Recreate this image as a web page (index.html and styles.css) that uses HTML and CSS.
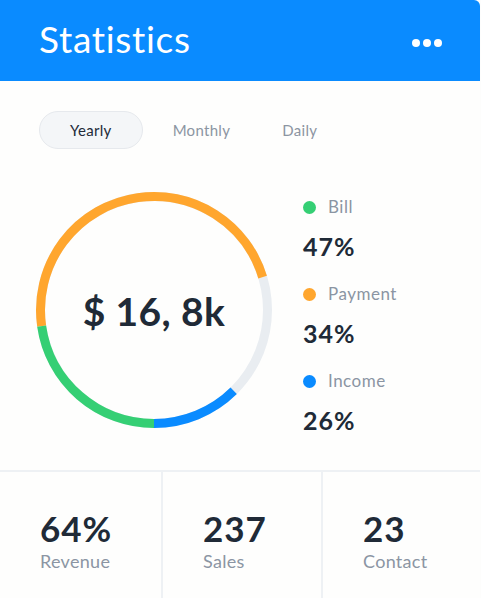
FILE: index.html
```html
<!DOCTYPE html>
<html>
<head>
<meta charset="utf-8">
<link rel="stylesheet" href="styles.css">
</head>
<body>
<div class="card">
  <header class="header">
    <h1 class="title">Statistics</h1>
    <div class="more"><span></span><span></span><span></span></div>
  </header>
  <nav class="tabs">
    <span class="tab tab-active">Yearly</span>
    <span class="tab">Monthly</span>
    <span class="tab">Daily</span>
  </nav>
  <section class="chart">
    <div class="donut">
      <svg width="240" height="240" viewBox="0 0 240 240">
        <circle cx="120" cy="120" r="113.5" fill="none" stroke="#e9edf1" stroke-width="9"/>
        <circle cx="120" cy="120" r="113.5" fill="none" stroke="#ffa62e" stroke-width="9" pathLength="360" stroke-dasharray="171.3 360" transform="rotate(171.8 120 120)"/>
        <circle cx="120" cy="120" r="113.5" fill="none" stroke="#0a8bff" stroke-width="9" pathLength="360" stroke-dasharray="44.6 360" transform="rotate(45.4 120 120)"/>
        <circle cx="120" cy="120" r="113.5" fill="none" stroke="#35cf74" stroke-width="9" pathLength="360" stroke-dasharray="81.8 360" transform="rotate(90 120 120)"/>
      </svg>
      <div class="total">$ 16, 8k</div>
    </div>
    <ul class="legend">
      <li class="legend-item">
        <div class="legend-label"><i class="dot dot-green"></i>Bill</div>
        <div class="legend-value">47%</div>
      </li>
      <li class="legend-item">
        <div class="legend-label"><i class="dot dot-orange"></i>Payment</div>
        <div class="legend-value">34%</div>
      </li>
      <li class="legend-item">
        <div class="legend-label"><i class="dot dot-blue"></i>Income</div>
        <div class="legend-value">26%</div>
      </li>
    </ul>
  </section>
  <section class="stats">
    <div class="stat"><div class="stat-num">64%</div><div class="stat-label">Revenue</div></div>
    <div class="stat"><div class="stat-num">237</div><div class="stat-label">Sales</div></div>
    <div class="stat"><div class="stat-num">23</div><div class="stat-label">Contact</div></div>
  </section>
</div>
</body>
</html>
```

FILE: styles.css
```css
* { box-sizing: border-box; margin: 0; padding: 0; }
html, body { background: #fdfdfc; }
body { font-family: "Lato", "Open Sans", sans-serif; color: #1f2937; }
.card { width: 480px; height: 598px; background: #fefefd; }
.header {
  height: 81px; background: #0a8bff; border-top-right-radius: 6px;
  display: flex; align-items: center; justify-content: space-between;
  padding: 0 38px 0 39px;
}
.title { color: #fff; font-weight: 400; font-size: 37px; letter-spacing: 0.7px; margin-top: -4px; }
.more { display: flex; gap: 3px; margin-top: 4px; }
.more span { width: 8px; height: 8px; border-radius: 50%; background: #fff; }
.tabs { display: flex; align-items: center; gap: 8px; padding: 30px 0 0 39px; }
.tab { height: 38px; line-height: 38px; font-size: 15px; letter-spacing: 0.3px; color: #8c95a2; padding: 0 22px; }
.tab-active { color: #222b38; background: #f4f6f8; border: 1px solid #e6e9ed; border-radius: 19px; padding: 0 30px; line-height: 36px; }
.chart { display: flex; padding: 41px 0 0 34px; height: 321px; }
.donut { position: relative; width: 240px; height: 240px; }
.donut svg { display: block; }
.total {
  position: absolute; inset: 0; display: flex; align-items: center; justify-content: center;
  font-size: 39px; font-weight: 700; letter-spacing: 0.4px; color: #202a37; padding-top: 2px;
}
.legend { list-style: none; margin-left: 29px; padding-top: 7px; }
.legend-item { height: 87px; }
.legend-label { display: flex; align-items: center; font-size: 17px; letter-spacing: 0.5px; line-height: 20px; color: #8b95a3; }
.dot { width: 13px; height: 13px; border-radius: 50%; margin-right: 12px; display: inline-block; }
.dot-green { background: #35cf74; }
.dot-orange { background: #ffa62e; }
.dot-blue { background: #0a8bff; }
.legend-value { font-size: 25px; font-weight: 700; letter-spacing: 1px; line-height: 30px; margin-top: 14px; color: #202a37; }
.stats { display: grid; grid-template-columns: 161px 160px 159px; border-top: 2px solid #eef1f4; height: 128px; }
.stat { padding: 36px 0 0 40px; }
.stat + .stat { border-left: 2px solid #eef1f4; }
.stat-num { font-size: 35px; font-weight: 700; letter-spacing: 1px; line-height: 40px; color: #202a37; }
.stat-label { font-size: 18px; letter-spacing: 0.3px; color: #8b95a3; line-height: 24px; margin-top: 1px; }
```
